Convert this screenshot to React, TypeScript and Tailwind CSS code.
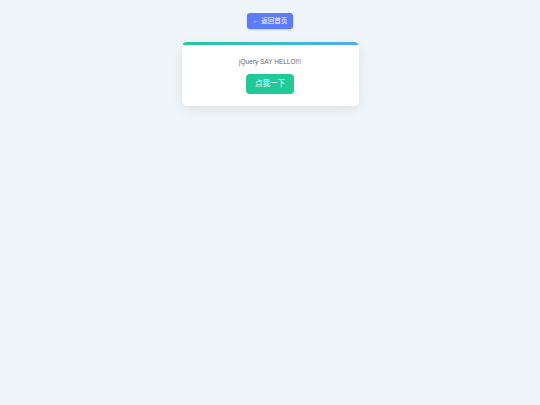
import React from 'react';

export default function App() {
  return (
    <div
      className="min-h-[405px] w-full bg-[#f0f5f9] flex flex-col items-center pt-[13px]"
      style={{ fontFamily: '"Liberation Sans", "Noto Sans CJK SC", sans-serif' }}
    >
      <button className="h-[16px] px-[6px] rounded-[3px] bg-[#5c7cfa] text-white text-[6.5px] leading-none shadow-[0_1px_2px_rgba(92,124,250,0.3)]">
        ← 返回首页
      </button>

      <div className="mt-[13px] w-[177px] bg-white rounded-[5px] overflow-hidden shadow-[0_4px_12px_rgba(0,0,0,0.08)]">
        <div className="h-[3px] bg-gradient-to-r from-[#20c997] to-[#4dabf7]" />
        <div className="flex flex-col items-center pt-[12px] pb-[12px]">
          <p className="text-[6.5px] leading-[9px] text-[#666]">jQuery SAY HELLO!!!</p>
          <button className="mt-[8px] w-[48px] h-[20px] rounded-[4px] bg-[#20c997] text-white text-[7.5px] leading-none">
            点我一下
          </button>
        </div>
      </div>
    </div>
  );
}
